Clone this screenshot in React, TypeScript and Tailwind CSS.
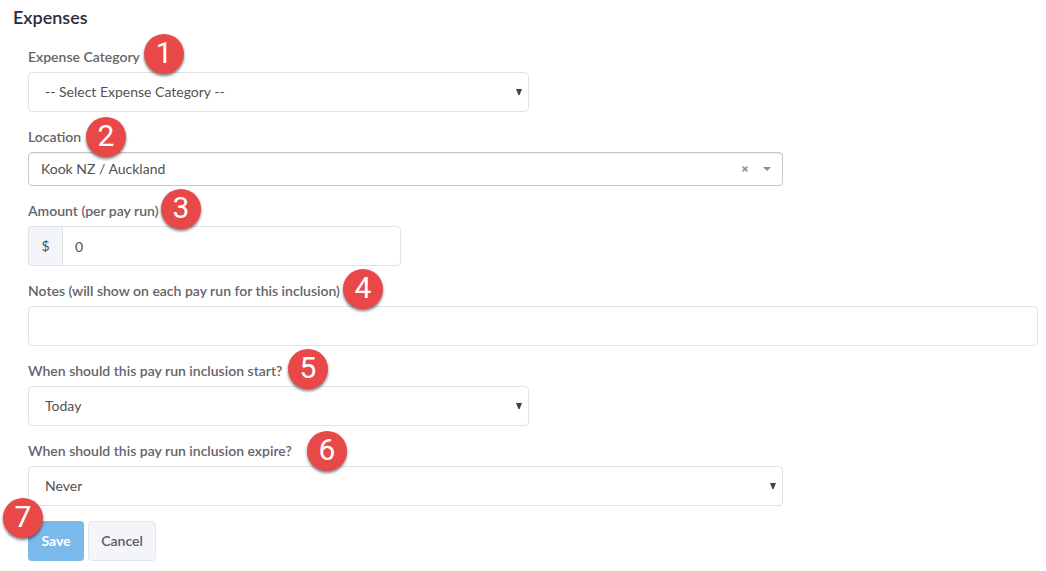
import { useState } from "react";
import type { ReactNode } from "react";
import clsx from "clsx";

const controlClasses =
  "block h-10 w-full appearance-none rounded border border-[#dde3e6] bg-white text-sm text-[#515253] outline-none focus:border-[#7abaea]";

const Badge = ({ value, className }: { value: number; className: string }) => (
  <span
    aria-hidden="true"
    className={clsx(
      "pointer-events-none absolute z-10 flex size-10 items-center justify-center rounded-full bg-[#e84848] pb-0.5 font-[Roboto,sans-serif] text-[30px] leading-none font-normal text-white shadow-[0_2px_3px_rgba(0,0,0,0.5)]",
      className
    )}
  >
    {value}
  </span>
);

interface FieldProps {
  id: string;
  label: string;
  step: number;
  badgeClassName: string;
  className: string;
  children: ReactNode;
}

const Field = ({
  id,
  label,
  step,
  badgeClassName,
  className,
  children,
}: FieldProps) => (
  <div className={clsx("relative", className)}>
    <label
      htmlFor={id}
      className="mb-[5px] block text-sm leading-5 font-semibold whitespace-nowrap text-[#646469]"
    >
      {label}
    </label>
    {children}
    <Badge value={step} className={badgeClassName} />
  </div>
);

interface SelectBoxProps {
  id: string;
  value: string;
  options: string[];
  onChange: (value: string) => void;
}

const SelectBox = ({ id, value, options, onChange }: SelectBoxProps) => (
  <div className="relative">
    <select
      id={id}
      value={value}
      onChange={(e) => onChange(e.target.value)}
      className={clsx(controlClasses, "pr-8 pl-4")}
    >
      {options.map((option) => (
        <option key={option}>{option}</option>
      ))}
    </select>
    <svg
      viewBox="0 0 6 6"
      className="pointer-events-none absolute top-[17px] right-[7px] size-[6px] fill-[#444]"
    >
      <path d="M0 0h6L3.6 6H2.4z" />
    </svg>
  </div>
);

const App = () => {
  const [category, setCategory] = useState("-- Select Expense Category --");
  const [location, setLocation] = useState("Kook NZ / Auckland");
  const [amount, setAmount] = useState("0");
  const [notes, setNotes] = useState("");
  const [start, setStart] = useState("Today");
  const [expire, setExpire] = useState("Never");

  return (
    <main className="bg-white pt-[7px] pr-2 pb-2.5 pl-7 font-[Lato,sans-serif]">
      <h1 className="mb-5 -ml-[15px] text-lg leading-5 font-semibold text-[#2b2d3a]">
        Expenses
      </h1>
      <form onSubmit={(e) => e.preventDefault()}>
        <div className="grid grid-cols-[repeat(24,minmax(0,1fr))] gap-x-[9px] gap-y-[15px]">
          <Field
            id="category"
            label="Expense Category"
            step={1}
            badgeClassName="-top-[13px] left-[116px]"
            className="col-start-1 col-end-13"
          >
            <SelectBox
              id="category"
              value={category}
              options={["-- Select Expense Category --", "Travel", "Meals"]}
              onChange={setCategory}
            />
          </Field>

          <Field
            id="location"
            label="Location"
            step={2}
            badgeClassName="-top-[10px] left-[58px]"
            className="col-start-1 col-end-19"
          >
            <div className="relative">
              <select
                id="location"
                value={location}
                onChange={(e) => setLocation(e.target.value)}
                className="block h-[34px] w-full appearance-none rounded border border-[#c8c8c8] bg-white pr-14 pl-3 text-sm text-[#515253] shadow-[inset_0_1px_1px_rgba(0,0,0,0.08)] outline-none"
              >
                <option value="" />
                <option>Kook NZ / Auckland</option>
              </select>
              <button
                type="button"
                aria-label="Clear location"
                onClick={() => setLocation("")}
                className="absolute top-3 right-[33px] flex size-[10px] items-center justify-center text-[#8f8f8f]"
              >
                <svg viewBox="0 0 6 6" className="size-[6px]">
                  <path
                    d="M.6 .6l4.8 4.8M5.4 .6L.6 5.4"
                    stroke="currentColor"
                    strokeWidth="1.6"
                  />
                </svg>
              </button>
              <svg
                viewBox="0 0 8 4"
                className="pointer-events-none absolute top-[15px] right-3 h-1 w-2 fill-[#909090]"
              >
                <path d="M0 0h8L4 4z" />
              </svg>
            </div>
          </Field>

          <Field
            id="amount"
            label="Amount (per pay run)"
            step={3}
            badgeClassName="-top-[12px] left-[133px]"
            className="col-start-1 col-end-10"
          >
            <div className="flex">
              <span className="flex w-[34px] shrink-0 items-center justify-center rounded-l border border-r-0 border-[#dde3e6] bg-[#f3f5f8] text-sm text-[#515253]">
                $
              </span>
              <input
                id="amount"
                type="text"
                value={amount}
                onChange={(e) => setAmount(e.target.value)}
                className={clsx(controlClasses, "min-w-0 rounded-l-none px-3")}
              />
            </div>
          </Field>

          <Field
            id="notes"
            label="Notes (will show on each pay run for this inclusion)"
            step={4}
            badgeClassName="-top-[12px] left-[315px]"
            className="col-span-full"
          >
            <input
              id="notes"
              type="text"
              value={notes}
              onChange={(e) => setNotes(e.target.value)}
              className={clsx(controlClasses, "px-4")}
            />
          </Field>

          <Field
            id="start"
            label="When should this pay run inclusion start?"
            step={5}
            badgeClassName="-top-[12px] left-[260px]"
            className="col-start-1 col-end-13"
          >
            <SelectBox
              id="start"
              value={start}
              options={["Today", "On a specific date"]}
              onChange={setStart}
            />
          </Field>

          <Field
            id="expire"
            label="When should this pay run inclusion expire?"
            step={6}
            badgeClassName="-top-[10px] left-[279px]"
            className="col-start-1 col-end-19"
          >
            <SelectBox
              id="expire"
              value={expire}
              options={["Never", "On a specific date"]}
              onChange={setExpire}
            />
          </Field>
        </div>

        <div className="relative mt-[15px] flex gap-1">
          <button
            type="submit"
            className="h-10 w-14 rounded bg-[#7abaea] text-sm font-bold text-white"
          >
            Save
          </button>
          <button
            type="button"
            className="h-10 w-[68px] rounded border border-[#e2e5ea] bg-[#f3f5f8] text-sm font-semibold text-[#5c5c63]"
          >
            Cancel
          </button>
          <Badge value={7} className="-top-[23px] -left-[25px]" />
        </div>
      </form>
    </main>
  );
};

export default App;
